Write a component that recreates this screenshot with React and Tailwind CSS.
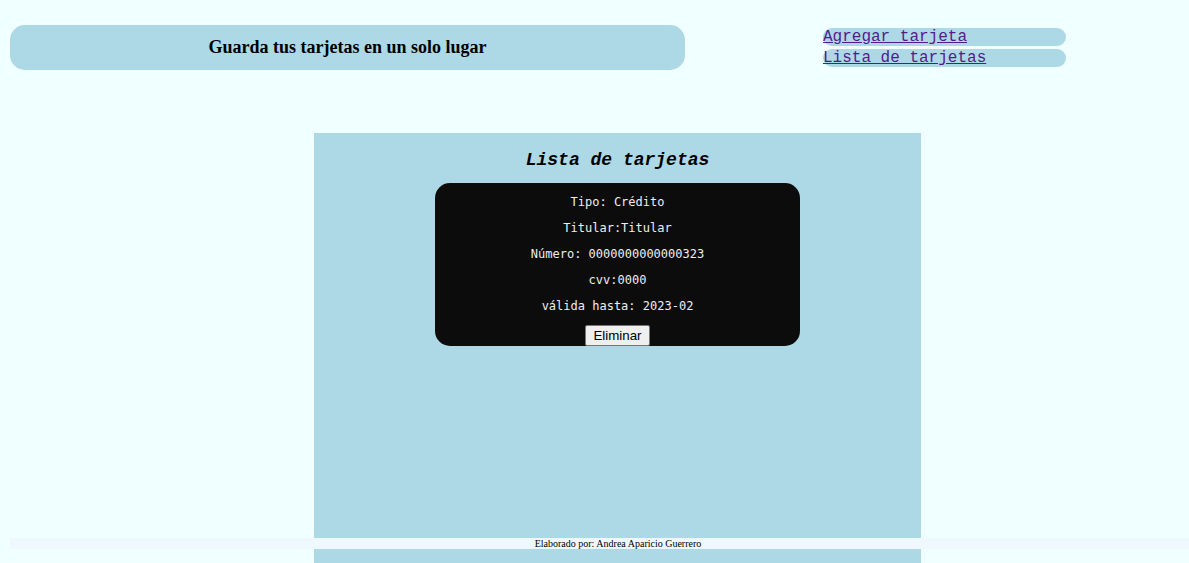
export default function App() {
  const mono = { fontFamily: '"DejaVu Sans Mono", monospace' };
  return (
    <div className="min-h-[563px] h-[563px] overflow-hidden bg-[#F0FFFF] relative">
      <div className="flex items-start">
        <div className="ml-[10px] mt-[25px] w-[675px] h-[45px] rounded-[15px] bg-[#ADD8E6] flex items-center justify-center">
          <h1 className="text-[18px] leading-[21px] font-bold text-black -mt-[1px]" style={{ fontFamily: '"Liberation Serif", serif' }}>
            Guarda tus tarjetas en un solo lugar
          </h1>
        </div>
        <nav className="ml-[138px] mt-[28px] flex flex-col gap-[3px] w-[243px]" style={{ fontFamily: '"Liberation Mono", monospace' }}>
          <div className="h-[18px] rounded-full bg-[#ADD8E6] flex items-center">
            <a href="#" className="text-[16px] leading-[18px] text-[#551A8B] underline">Agregar tarjeta</a>
          </div>
          <div className="h-[18px] rounded-full bg-[#ADD8E6] flex items-center">
            <a href="#" className="text-[16px] leading-[18px] text-[#551A8B] underline">Lista de tarjetas</a>
          </div>
        </nav>
      </div>
      <main className="ml-[314px] mt-[63px] w-[607px] h-[430px] bg-[#ADD8E6] flex flex-col items-center pt-[17px]">
        <h2 className="text-[18px] leading-[21px] font-bold italic text-black" style={{ fontFamily: '"Liberation Mono", monospace' }}>
          Lista de tarjetas
        </h2>
        <div className="mt-[12px] w-[365px] bg-[#0D0C0D] rounded-[15px] flex flex-col items-center pt-[12px] text-[#EEEEEE] text-[12px] leading-[14px]" style={mono}>
          <p>Tipo: Crédito</p>
          <p className="mt-[12px]">Titular:Titular</p>
          <p className="mt-[12px]">Número: 0000000000000323</p>
          <p className="mt-[12px]">cvv:0000</p>
          <p className="mt-[12px]">válida hasta: 2023-02</p>
          <button className="mt-[12px] h-[21px] px-[7px] bg-[#EFEFEF] border border-[#767676] rounded-[2px] text-black text-[13.33px]" style={{ fontFamily: '"Liberation Sans", Arial, sans-serif' }}>
            Eliminar
          </button>
        </div>
      </main>
      <footer className="absolute left-[10px] right-0 top-[538px] h-[11px] bg-[#F0F8FF] pl-[37px] text-center text-[10px] leading-[11px] text-black" style={{ fontFamily: '"Liberation Serif", serif' }}>
        Elaborado por: Andrea Aparicio Guerrero
      </footer>
    </div>
  );
}
